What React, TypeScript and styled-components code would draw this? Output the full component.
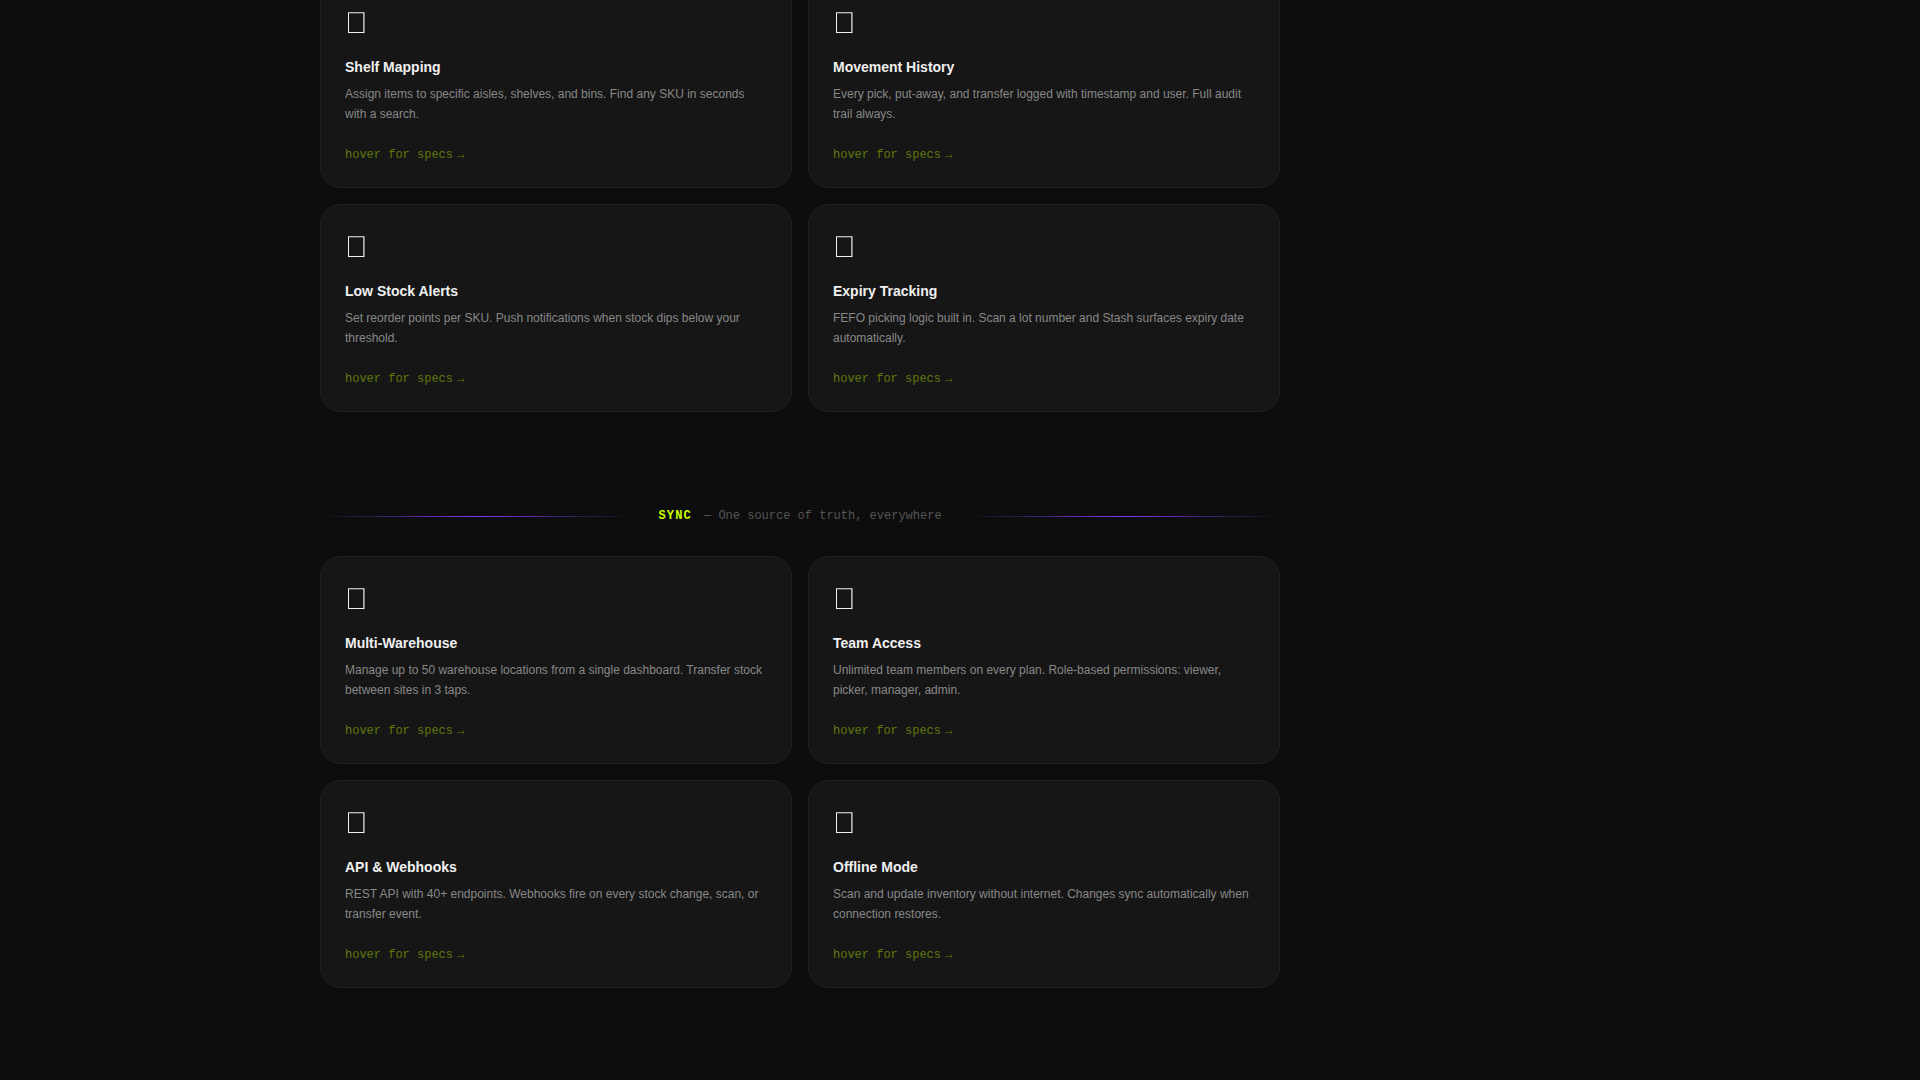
import React from "react";
import styled, { createGlobalStyle } from "styled-components";

const sans = `"Liberation Sans", Arial, sans-serif`;
const mono = `"Liberation Mono", "Courier New", monospace`;

const GlobalStyle = createGlobalStyle`
  *, *::before, *::after { box-sizing: border-box; }
  body {
    margin: 0;
    background: #0d0d0d;
    color: #f0f0f0;
    font-family: ${sans};
  }
`;

const Page = styled.main`
  min-height: 100vh;
  max-width: 1280px;
  margin: 0 auto;
  padding-bottom: 92px;
  overflow: hidden;
`;

const Features = styled.div`
  width: 75%;
  margin-top: -20px;
  display: flex;
  flex-direction: column;
  gap: 96px;
`;

const Group = styled.section`
  display: flex;
  flex-direction: column;
  gap: 32px;
`;

const CardGrid = styled.div`
  display: grid;
  grid-template-columns: repeat(2, minmax(0, 1fr));
  gap: 16px;
`;

const Card = styled.article`
  display: flex;
  flex-direction: column;
  padding: 24px;
  border: 1px solid #222222;
  border-radius: 20px;
  background: #161616;
`;

const CardIcon = styled.span`
  display: flex;
  height: 37px;
  margin-bottom: 16px;
  padding: 7px 3px;
`;

const CardTitle = styled.h3`
  margin: 0 0 8px;
  font-size: 14px;
  font-weight: 700;
  line-height: 18px;
`;

const CardText = styled.p`
  margin: 0 0 24px;
  color: #888888;
  font-size: 12px;
  line-height: 20px;
`;

const Hint = styled.div`
  display: flex;
  gap: 4px;
  color: #ccff00;
  font-family: ${mono};
  font-size: 12px;
  line-height: 15px;
  opacity: 0.4;
`;

const Divider = styled.header`
  display: flex;
  align-items: center;
  gap: 24px;
`;

const Rule = styled.span`
  flex: 1;
  height: 1px;
  background: linear-gradient(90deg, transparent, #7c3aed, transparent);
`;

const DividerLabel = styled.div`
  display: flex;
  gap: 12px;
  font-family: ${mono};
  font-size: 12px;
  line-height: 16px;
`;

const GroupName = styled.h2`
  margin: 0;
  color: #ccff00;
  font-size: 12px;
  font-weight: 700;
  letter-spacing: 0.1em;
`;

const Tagline = styled.span`
  color: #555555;
`;

interface Feature {
  title: string;
  text: string;
}

const stock: Feature[] = [
  { title: "Shelf Mapping", text: "Assign items to specific aisles, shelves, and bins. Find any SKU in seconds with a search." },
  { title: "Movement History", text: "Every pick, put-away, and transfer logged with timestamp and user. Full audit trail always." },
  { title: "Low Stock Alerts", text: "Set reorder points per SKU. Push notifications when stock dips below your threshold." },
  { title: "Expiry Tracking", text: "FEFO picking logic built in. Scan a lot number and Stash surfaces expiry date automatically." },
];

const sync: Feature[] = [
  { title: "Multi-Warehouse", text: "Manage up to 50 warehouse locations from a single dashboard. Transfer stock between sites in 3 taps." },
  { title: "Team Access", text: "Unlimited team members on every plan. Role-based permissions: viewer, picker, manager, admin." },
  { title: "API & Webhooks", text: "REST API with 40+ endpoints. Webhooks fire on every stock change, scan, or transfer event." },
  { title: "Offline Mode", text: "Scan and update inventory without internet. Changes sync automatically when connection restores." },
];

function FrameIcon() {
  return (
    <svg width="17" height="21" viewBox="0 0 17 21" fill="currentColor">
      <path fillRule="evenodd" d="M0 .2H16.5V21H0ZM1 1.3V20H15.3V1.3Z" />
    </svg>
  );
}

function FeatureGrid({ items }: { items: Feature[] }) {
  return (
    <CardGrid>
      {items.map((item) => (
        <Card key={item.title}>
          <CardIcon aria-hidden="true">
            <FrameIcon />
          </CardIcon>
          <CardTitle>{item.title}</CardTitle>
          <CardText>{item.text}</CardText>
          <Hint>
            <span>hover for specs</span>
            <span>→</span>
          </Hint>
        </Card>
      ))}
    </CardGrid>
  );
}

export default function App() {
  return (
    <>
      <GlobalStyle />
      <Page>
        <Features>
          <Group>
            <FeatureGrid items={stock} />
          </Group>
          <Group>
            <Divider>
              <Rule />
              <DividerLabel>
                <GroupName>SYNC</GroupName>
                <Tagline>— One source of truth, everywhere</Tagline>
              </DividerLabel>
              <Rule />
            </Divider>
            <FeatureGrid items={sync} />
          </Group>
        </Features>
      </Page>
    </>
  );
}
